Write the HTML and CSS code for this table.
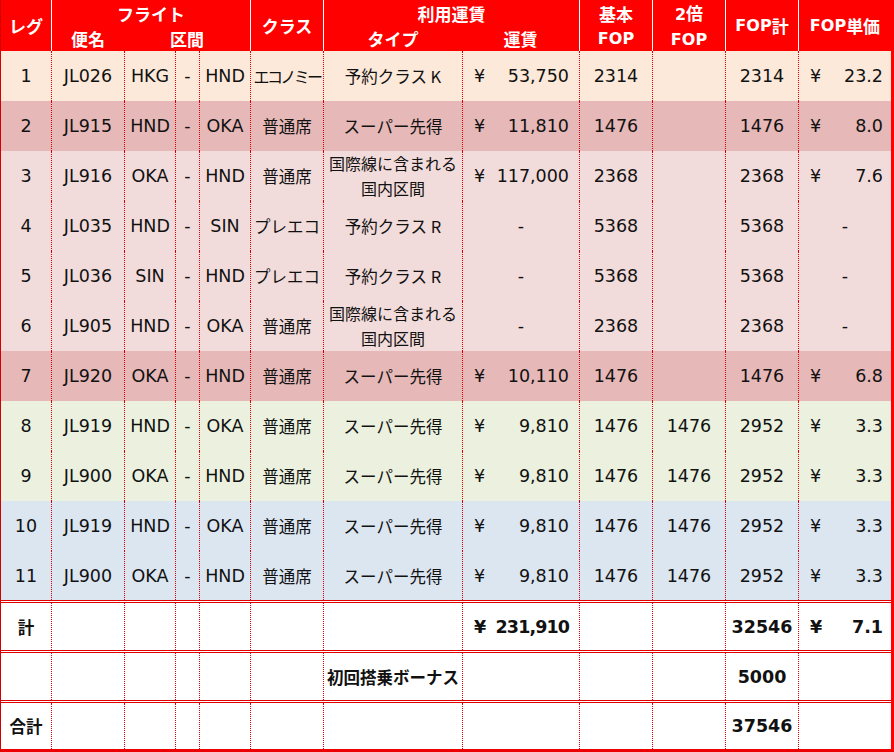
FILE: index.html
```html
<!DOCTYPE html>
<html lang="ja">
<head>
<meta charset="utf-8">
<title>FOP</title>
<link rel="stylesheet" href="styles.css">
</head>
<body>
<div class="sheet">
  <div class="head">
    <div class="h h-leg"><span class="j">レグ</span></div>
    <div class="h h-flight"><span class="j">フライト</span></div>
    <div class="h h-class"><span class="j">クラス</span></div>
    <div class="h h-fare"><span class="j">利用運賃</span></div>
    <div class="h h-base two"><span class="j">基本</span><span>FOP</span></div>
    <div class="h h-dbl two"><span>2<span class="j">倍</span></span><span>FOP</span></div>
    <div class="h h-tot">FOP<span class="j">計</span></div>
    <div class="h h-unit">FOP<span class="j">単価</span></div>
    <div class="h h-no"><span class="j">便名</span></div>
    <div class="h h-sec"><span class="j">区間</span></div>
    <div class="h h-type"><span class="j">タイプ</span></div>
    <div class="h h-price"><span class="j">運賃</span></div>
  </div>

  <div class="row peach">
    <div class="c">1</div><div class="c">JL026</div><div class="c">HKG</div><div class="c">-</div><div class="c">HND</div>
    <div class="c jp squeeze">エコノミー</div><div class="c jp">予約クラス K</div>
    <div class="c fare"><span>¥</span><span>53,750</span></div>
    <div class="c">2314</div><div class="c"></div><div class="c">2314</div>
    <div class="c unit"><span>¥</span><span>23.2</span></div>
  </div>
  <div class="row rose">
    <div class="c">2</div><div class="c">JL915</div><div class="c">HND</div><div class="c">-</div><div class="c">OKA</div>
    <div class="c jp">普通席</div><div class="c jp">スーパー先得</div>
    <div class="c fare"><span>¥</span><span>11,810</span></div>
    <div class="c">1476</div><div class="c"></div><div class="c">1476</div>
    <div class="c unit"><span>¥</span><span>8.0</span></div>
  </div>
  <div class="row pink">
    <div class="c">3</div><div class="c">JL916</div><div class="c">OKA</div><div class="c">-</div><div class="c">HND</div>
    <div class="c jp">普通席</div><div class="c jp two-line">国際線に含まれる<br>国内区間</div>
    <div class="c fare"><span>¥</span><span>117,000</span></div>
    <div class="c">2368</div><div class="c"></div><div class="c">2368</div>
    <div class="c unit"><span>¥</span><span>7.6</span></div>
  </div>
  <div class="row pink">
    <div class="c">4</div><div class="c">JL035</div><div class="c">HND</div><div class="c">-</div><div class="c">SIN</div>
    <div class="c jp">プレエコ</div><div class="c jp">予約クラス R</div>
    <div class="c">-</div>
    <div class="c">5368</div><div class="c"></div><div class="c">5368</div>
    <div class="c">-</div>
  </div>
  <div class="row pink">
    <div class="c">5</div><div class="c">JL036</div><div class="c">SIN</div><div class="c">-</div><div class="c">HND</div>
    <div class="c jp">プレエコ</div><div class="c jp">予約クラス R</div>
    <div class="c">-</div>
    <div class="c">5368</div><div class="c"></div><div class="c">5368</div>
    <div class="c">-</div>
  </div>
  <div class="row pink">
    <div class="c">6</div><div class="c">JL905</div><div class="c">HND</div><div class="c">-</div><div class="c">OKA</div>
    <div class="c jp">普通席</div><div class="c jp two-line">国際線に含まれる<br>国内区間</div>
    <div class="c">-</div>
    <div class="c">2368</div><div class="c"></div><div class="c">2368</div>
    <div class="c">-</div>
  </div>
  <div class="row rose">
    <div class="c">7</div><div class="c">JL920</div><div class="c">OKA</div><div class="c">-</div><div class="c">HND</div>
    <div class="c jp">普通席</div><div class="c jp">スーパー先得</div>
    <div class="c fare"><span>¥</span><span>10,110</span></div>
    <div class="c">1476</div><div class="c"></div><div class="c">1476</div>
    <div class="c unit"><span>¥</span><span>6.8</span></div>
  </div>
  <div class="row green">
    <div class="c">8</div><div class="c">JL919</div><div class="c">HND</div><div class="c">-</div><div class="c">OKA</div>
    <div class="c jp">普通席</div><div class="c jp">スーパー先得</div>
    <div class="c fare"><span>¥</span><span>9,810</span></div>
    <div class="c">1476</div><div class="c">1476</div><div class="c">2952</div>
    <div class="c unit"><span>¥</span><span>3.3</span></div>
  </div>
  <div class="row green">
    <div class="c">9</div><div class="c">JL900</div><div class="c">OKA</div><div class="c">-</div><div class="c">HND</div>
    <div class="c jp">普通席</div><div class="c jp">スーパー先得</div>
    <div class="c fare"><span>¥</span><span>9,810</span></div>
    <div class="c">1476</div><div class="c">1476</div><div class="c">2952</div>
    <div class="c unit"><span>¥</span><span>3.3</span></div>
  </div>
  <div class="row blue">
    <div class="c">10</div><div class="c">JL919</div><div class="c">HND</div><div class="c">-</div><div class="c">OKA</div>
    <div class="c jp">普通席</div><div class="c jp">スーパー先得</div>
    <div class="c fare"><span>¥</span><span>9,810</span></div>
    <div class="c">1476</div><div class="c">1476</div><div class="c">2952</div>
    <div class="c unit"><span>¥</span><span>3.3</span></div>
  </div>
  <div class="row blue last">
    <div class="c">11</div><div class="c">JL900</div><div class="c">OKA</div><div class="c">-</div><div class="c">HND</div>
    <div class="c jp">普通席</div><div class="c jp">スーパー先得</div>
    <div class="c fare"><span>¥</span><span>9,810</span></div>
    <div class="c">1476</div><div class="c">1476</div><div class="c">2952</div>
    <div class="c unit"><span>¥</span><span>3.3</span></div>
  </div>

  <div class="row sum">
    <div class="c jp">計</div><div class="c"></div><div class="c"></div><div class="c"></div><div class="c"></div>
    <div class="c"></div><div class="c"></div>
    <div class="c fare"><span>¥</span><span class="tight">231,910</span></div>
    <div class="c"></div><div class="c"></div><div class="c">32546</div>
    <div class="c unit"><span>¥</span><span>7.1</span></div>
  </div>
  <div class="row sum">
    <div class="c"></div><div class="c"></div><div class="c"></div><div class="c"></div><div class="c"></div>
    <div class="c"></div><div class="c jp">初回搭乗ボーナス</div>
    <div class="c"></div>
    <div class="c"></div><div class="c"></div><div class="c">5000</div>
    <div class="c"></div>
  </div>
  <div class="row sum final">
    <div class="c jp">合計</div><div class="c"></div><div class="c"></div><div class="c"></div><div class="c"></div>
    <div class="c"></div><div class="c"></div>
    <div class="c"></div>
    <div class="c"></div><div class="c"></div><div class="c">37546</div>
    <div class="c"></div>
  </div>
</div>
</body>
</html>
```

FILE: styles.css
```css
* {
  box-sizing: border-box;
}

html, body {
  margin: 0;
  padding: 0;
  background: #ffffff;
}

.sheet {
  --cols: 50px 73px 51px 24px 51px 73px 139px 117px 73px 73px 73px 93px;
  width: 894px;
  height: 752px;
  display: flex;
  flex-direction: column;
  border-left: 1px solid #d40000;
  border-right: 3px solid #ff0000;
  border-bottom: 3px solid #ee0000;
  font-family: "DejaVu Sans", "Noto Sans CJK JP", sans-serif;
  font-size: 17.5px;
  color: #111111;
  overflow: hidden;
}

/* header */
.head {
  display: grid;
  grid-template-columns: var(--cols);
  grid-template-rows: 26px 25px;
  background: #ff0000;
  color: #ffffff;
  font-weight: bold;
  font-size: 16px;
  flex: none;
}

.h {
  display: flex;
  align-items: center;
  justify-content: center;
  border-left: 1px solid #ffffff;
  white-space: nowrap;
}

.h .j {
  font-family: "Noto Sans CJK JP", sans-serif;
  font-size: 17px;
}

.h-leg { grid-column: 1; grid-row: 1 / 3; border-left: none; }
.h-flight { grid-column: 2 / 6; grid-row: 1; }
.h-class { grid-column: 6; grid-row: 1 / 3; }
.h-fare { grid-column: 7 / 9; grid-row: 1; }
.h-base { grid-column: 9; grid-row: 1 / 3; }
.h-dbl { grid-column: 10; grid-row: 1 / 3; }
.h-tot { grid-column: 11; grid-row: 1 / 3; }
.h-unit { grid-column: 12; grid-row: 1 / 3; }
.h-no { grid-column: 2; grid-row: 2; }
.h-sec { grid-column: 3 / 6; grid-row: 2; border-left: none; }
.h-type { grid-column: 7; grid-row: 2; }
.h-price { grid-column: 8; grid-row: 2; border-left: none; }

.h.two {
  flex-direction: column;
  line-height: 25px;
}

/* body rows */
.row {
  display: grid;
  grid-template-columns: var(--cols);
  height: 50px;
  flex: none;
}

.row.last { height: 49px; }
.row.final { height: 49px; }

.peach { background: #fde9d9; }
.rose { background: #e6b8b7; }
.pink { background: #f2dcdb; }
.green { background: #ebf1de; }
.blue { background: #dce6f1; }

.sum {
  background: #ffffff;
  border-top: 3px double #e00000;
  font-weight: bold;
}

.c {
  display: flex;
  align-items: center;
  justify-content: center;
  border-left: 1px dotted #d80000;
  white-space: nowrap;
  min-width: 0;
}

.c:first-child {
  border-left: none;
}

.c.jp {
  font-family: "Noto Sans CJK JP", sans-serif;
  font-size: 16.5px;
}

.c.two-line {
  font-size: 16px;
  flex-direction: column;
  line-height: 25px;
  text-align: center;
}

.c.squeeze {
  font-size: 16px;
  letter-spacing: -2.6px;
}

.sum .c.jp {
  font-size: 16.5px;
}

.c.fare {
  justify-content: space-between;
  padding: 0 10px 0 11px;
}

.c.unit {
  justify-content: space-between;
  padding: 0 8px 0 11px;
}

.tight {
  letter-spacing: -0.9px;
}
```
